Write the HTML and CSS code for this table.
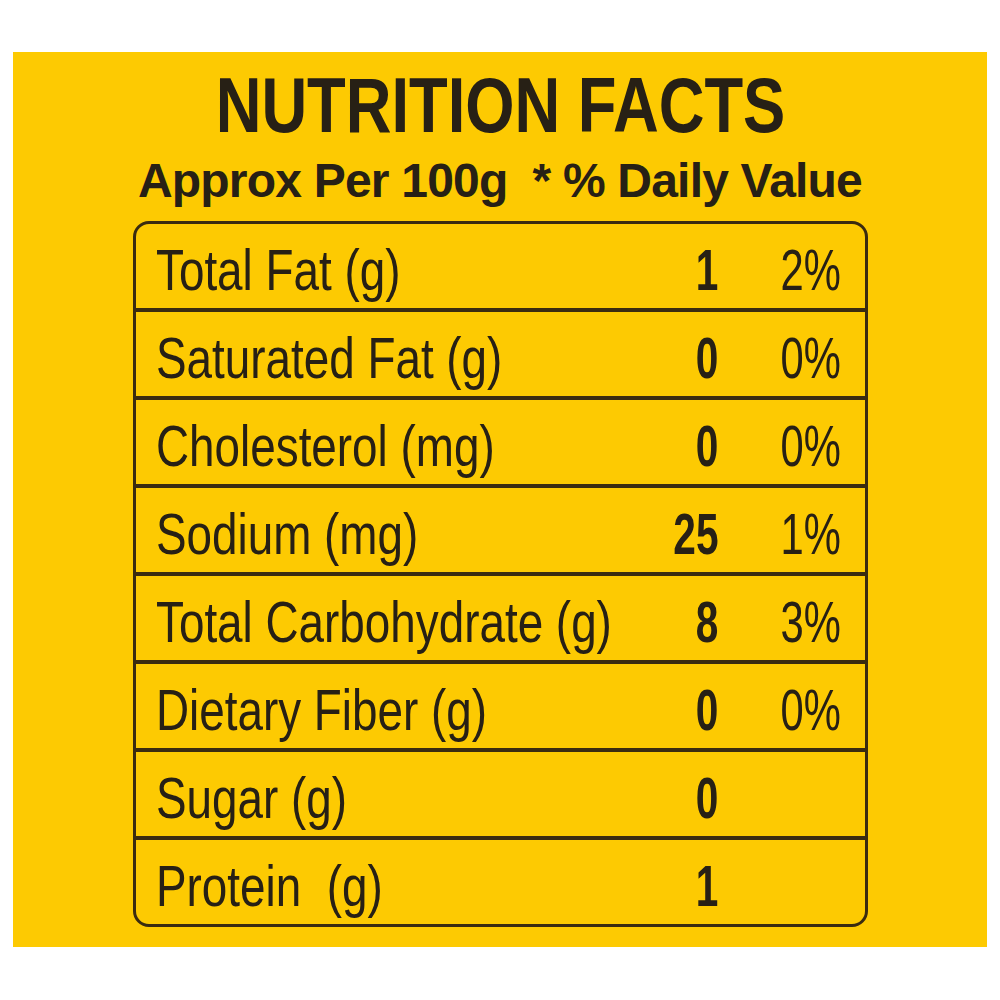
FILE: index.html
```html
<!DOCTYPE html>
<html lang="en">
<head>
<meta charset="utf-8">
<title>Nutrition Facts</title>
<link rel="stylesheet" href="styles.css">
</head>
<body>
<main class="panel">
  <h1 class="title"><span class="title-text">NUTRITION FACTS</span></h1>
  <p class="subtitle">Approx Per 100g&nbsp; * % Daily Value</p>
  <div class="facts">
    <div class="row"><span class="label"><span class="narrow">Total Fat (g)</span></span><span class="amount"><span class="num">1</span></span><span class="dv"><span class="pct">2%</span></span></div>
    <div class="row"><span class="label"><span class="narrow">Saturated Fat (g)</span></span><span class="amount"><span class="num">0</span></span><span class="dv"><span class="pct">0%</span></span></div>
    <div class="row"><span class="label"><span class="narrow">Cholesterol (mg)</span></span><span class="amount"><span class="num">0</span></span><span class="dv"><span class="pct">0%</span></span></div>
    <div class="row"><span class="label"><span class="narrow">Sodium (mg)</span></span><span class="amount"><span class="num">25</span></span><span class="dv"><span class="pct">1%</span></span></div>
    <div class="row"><span class="label"><span class="narrow">Total Carbohydrate (g)</span></span><span class="amount"><span class="num">8</span></span><span class="dv"><span class="pct">3%</span></span></div>
    <div class="row"><span class="label"><span class="narrow">Dietary Fiber (g)</span></span><span class="amount"><span class="num">0</span></span><span class="dv"><span class="pct">0%</span></span></div>
    <div class="row"><span class="label"><span class="narrow">Sugar (g)</span></span><span class="amount"><span class="num">0</span></span><span class="dv"></span></div>
    <div class="row"><span class="label"><span class="narrow">Protein&nbsp; (g)</span></span><span class="amount"><span class="num">1</span></span><span class="dv"></span></div>
  </div>
</main>
</body>
</html>
```

FILE: styles.css
```css
html, body {
  margin: 0;
  padding: 0;
  background: #ffffff;
}

body {
  width: 1000px;
  height: 1000px;
  overflow: hidden;
}

.panel {
  margin: 52px 13px 0 13px;
  height: 895px;
  box-sizing: border-box;
  padding-top: 15px;
  background: #fdca02;
  color: #272015;
  display: flex;
  flex-direction: column;
  align-items: center;
  font-family: "Liberation Sans", Arial, sans-serif;
}

.title {
  margin: 0;
  font-weight: 700;
  font-size: 77px;
  line-height: 77px;
  white-space: nowrap;
}

.title-text {
  display: inline-block;
  transform: scaleX(0.822);
  transform-origin: center;
}

.subtitle {
  margin: 13px 0 0 0;
  font-weight: 700;
  font-size: 48px;
  line-height: 48px;
  letter-spacing: -0.8px;
  white-space: nowrap;
}

.facts {
  margin-top: 16px;
  width: 735px;
  box-sizing: border-box;
  border: 3px solid #3a2b10;
  border-radius: 16px;
  overflow: hidden;
}

.row {
  display: grid;
  grid-template-columns: minmax(0, 1fr) 100px 124px;
  align-items: center;
  height: 84px;
  box-sizing: border-box;
  padding-top: 8px;
  white-space: nowrap;
}

.row + .row {
  height: 88px;
  border-top: 4px solid #3a2b10;
}

.label {
  padding-left: 20px;
  font-size: 58px;
  line-height: 64px;
}

.narrow {
  display: inline-block;
  transform: scaleX(0.79);
  transform-origin: left center;
}

.amount {
  text-align: right;
  padding-right: 22px;
  font-weight: 700;
  font-size: 58px;
  line-height: 64px;
}

.num {
  display: inline-block;
  transform: scaleX(0.7);
  transform-origin: right center;
}

.dv {
  text-align: right;
  padding-right: 24px;
  font-size: 58px;
  line-height: 64px;
}

.pct {
  display: inline-block;
  transform: scaleX(0.72);
  transform-origin: right center;
}
```
